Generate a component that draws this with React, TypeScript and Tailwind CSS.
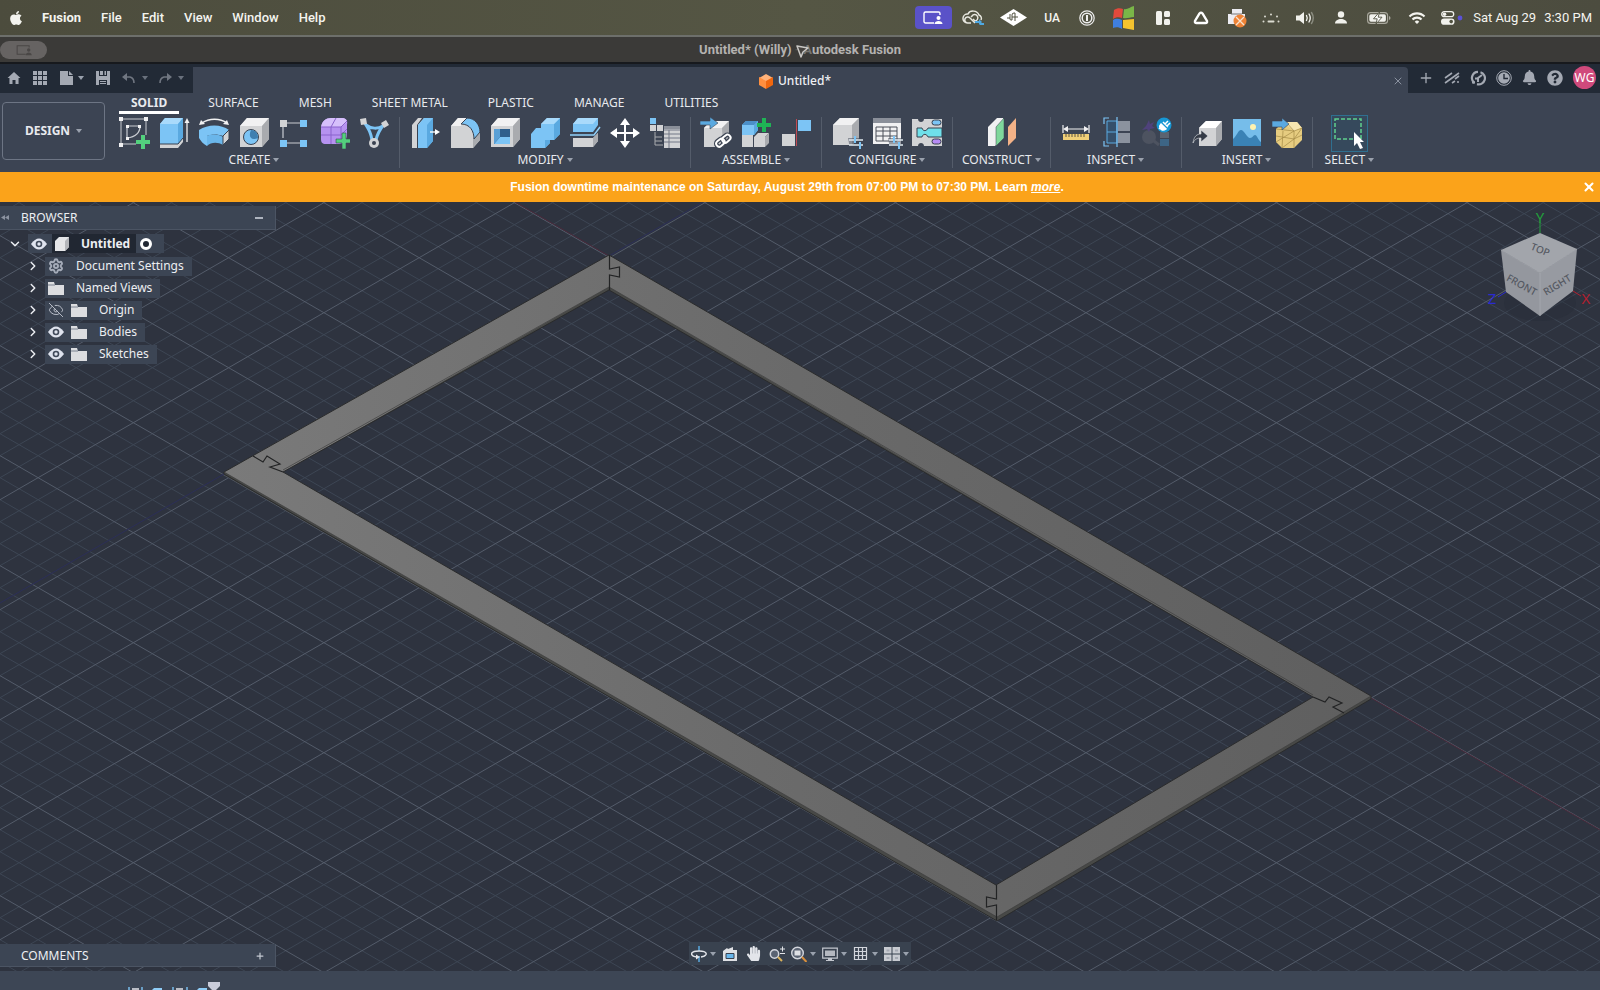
import React from "react";
import { FaApple, FaBell, FaHandPaper, FaQuestionCircle } from "react-icons/fa";
import { IoMdHome } from "react-icons/io";
import { MdWifi } from "react-icons/md";
import { ChevronDown, ChevronRight, EyeOff, Plus, Settings, X } from "lucide-react";

const BLUE = "#7cc4f5";
const BLUE_DARK = "#5aa9e0";
const WHITE = "#f1f1f2";
const GREY = "#d2d3d5";
const SHADE = "#a9abaf";

function Icon({ children }: { children: React.ReactNode }) {
  return (
    <svg viewBox="0 0 32 32" className="size-8" fill="none" aria-hidden="true">
      {children}
    </svg>
  );
}

function Caret() {
  return (
    <svg viewBox="0 0 6 4" className="h-1 w-1.5 shrink-0" aria-hidden="true">
      <path d="M0 0h6L3 4z" fill="#9aa1ad" />
    </svg>
  );
}

// White box used as the base of several tools
function Box() {
  return (
    <g>
      <path d="M2 9 9 1h22v21l-7 8H2z" fill={GREY} />
      <path d="M2 9 9 1h22l-7 8z" fill={WHITE} />
      <path d="M24 9l7-8v21l-7 8z" fill={SHADE} />
    </g>
  );
}

const createTools = [
  {
    name: "Create Sketch",
    icon: (
      <Icon>
        <path d="M3 2h25v16M3 2v25h15" stroke="#c9ccd2" />
        <path d="M1 0h4v4H1zM26 0h4v4h-4zM1 26h4v4H1z" fill={WHITE} />
        <path d="M9 21V9h13c0 7-5 11-13 12z" stroke="#c9ccd2" strokeWidth="1.2" />
        <path d="M8 8h3v3H8zM20 8h3v3h-3zM8 20h3v3H8z" fill={WHITE} />
        <path d="M23 18h4v5h5v4h-5v5h-4v-5h-5v-4h5z" fill="#53d07d" />
      </Icon>
    ),
  },
  {
    name: "Extrude",
    icon: (
      <Icon>
        <path d="M2 25h18l5-6v6l-5 6H2z" fill={GREY} />
        <path d="M2 7 7 1h18v20l-5 6H2z" fill={BLUE} />
        <path d="M2 7 7 1h18l-5 6z" fill="#a9dafb" />
        <path d="M20 7l5-6v20l-5 6z" fill={BLUE_DARK} />
        <path d="M2 27h18l5-6" stroke="#39414f" />
        <path d="M29 4v21" stroke={WHITE} strokeWidth="1.3" />
        <path d="M26.500 6 29 1l2.500 5z" fill={WHITE} />
      </Icon>
    ),
  },
  {
    name: "Revolve",
    icon: (
      <Icon>
        <path d="M1 13c9-6 22-6 30 0l-6 6c-5-2-12-2-16 0v10c-4-2-6-5-8-8z" fill={BLUE} />
        <path d="M9 19c4-2 11-2 16 1v8c-5-3-12-3-16 1z" fill="#6ab6ea" />
        <path d="M25 19l6-6v9l-6 6z" fill={GREY} stroke="#39414f" />
        <path d="M4 6C11 1 22 1 29 6" stroke={WHITE} strokeWidth="1.4" />
        <path d="M1 8l2-5 4 4zM31 8l-2-5-4 4z" fill={WHITE} />
      </Icon>
    ),
  },
  {
    name: "Hole",
    icon: (
      <Icon>
        <Box />
        <circle cx="13" cy="20" r="7.500" fill={BLUE} stroke="#3a4250" />
        <path d="M13 13c-3 7 0 11 7 8 0-5-3-8-7-8z" fill="#3f7fb0" />
      </Icon>
    ),
  },
  {
    name: "Pattern",
    icon: (
      <Icon>
        <path d="M8 6h14M5 9v12M8 26h14" stroke="#c9ccd2" strokeWidth="1.200" />
        <path d="M2 3h7v7H2z" fill={GREY} />
        <path d="M22 3h7v7h-7zM2 23h7v7H2zM22 23h7v7h-7z" fill={BLUE} />
      </Icon>
    ),
  },
  {
    name: "Create Form",
    icon: (
      <Icon>
        <path d="M3 10c1-6 5-9 10-9h11c4 0 6 2 5 7v10c0 5-4 9-8 9H8c-4 0-5-2-5-5z" fill="#b692f0" />
        <path d="M3 10c1-6 5-9 10-9h11c3 0 5 2 5 4l-6 5z" fill="#d6c0fb" />
        <path d="M3 18h20l6-6M13 27V10l5-9M23 27V10l6-6M3 10h20" stroke="#8a63cc" />
        <path d="M24 16h4v6h5v4h-5v6h-4v-6h-6v-4h6z" fill="#53d07d" stroke="#3a4a50" strokeWidth=".6" />
      </Icon>
    ),
  },
  {
    name: "Generative Design",
    icon: (
      <Icon>
        <path d="M6 5c6 9 7 12 8 18M26 7c-6 8-7 11-8 16M8 8c5 4 12 4 17 1" stroke={BLUE} strokeWidth="3" />
        <path d="M2 2l6-1 1 6-6 1zM23 6l5-3 3 5-5 3z" fill={GREY} />
        <circle cx="16" cy="26" r="5" fill={GREY} />
        <circle cx="16" cy="26" r="2" fill="#3a4250" />
      </Icon>
    ),
  },
];

const modifyTools = [
  {
    name: "Press Pull",
    icon: (
      <Icon>
        <path d="M3 8 9 1h8v22l-6 8H3z" fill={GREY} />
        <path d="M8 8 13 1h2L9 8v23H8z" fill="#3a4250" />
        <path d="M9 8 15 1h9v23l-6 7H9z" fill={BLUE} />
        <path d="M18 8l6-7v23l-6 7z" fill={BLUE_DARK} />
        <path d="M21 15h7" stroke="#fff" strokeWidth="1.300" />
        <path d="M26 12l5 3-5 3z" fill="#fff" />
      </Icon>
    ),
  },
  {
    name: "Fillet",
    icon: (
      <Icon>
        <path d="M2 9 9 1h8l14 18v4l-7 8H2z" fill={GREY} />
        <path d="M24 22l7-8v9l-7 8z" fill={SHADE} />
        <path d="M2 9 9 1h8l-5 8z" fill={WHITE} />
        <path d="M12 7l6-6c8 0 13 7 13 14l-6 7c0-8-4-15-13-15z" fill={BLUE} stroke="#3a4250" />
      </Icon>
    ),
  },
  {
    name: "Shell",
    icon: (
      <Icon>
        <Box />
        <path d="M5 12h16v15H5z" fill="#2f5f8c" />
        <path d="M5 27l6-7h10v7z" fill={BLUE} />
        <path d="M5 12h6v8l-6 7z" fill="#5aa0d6" />
      </Icon>
    ),
  },
  {
    name: "Combine",
    icon: (
      <Icon>
        <path d="M2 17l5-6h5V7l6-6h13v16l-6 6h-4v3l-5 5H2z" fill={BLUE} />
        <path d="M25 7l6-6v16l-6 6zM21 23v3l-5 5v-8z" fill={BLUE_DARK} />
        <path d="M12 7l6-6h13l-6 6z" fill="#a9dafb" />
      </Icon>
    ),
  },
  {
    name: "Split Body",
    icon: (
      <Icon>
        <path d="M4 21h20l5-5v8l-5 6H4z" fill={GREY} />
        <path d="M24 21l5-5v8l-5 6z" fill={SHADE} />
        <path d="M4 7 9 1h20v7l-5 7H4z" fill={BLUE} />
        <path d="M4 7 9 1h20l-5 6z" fill="#a9dafb" />
        <path d="M1 18h24l6-8" stroke="#8fd0fa" strokeWidth="1.500" />
      </Icon>
    ),
  },
  {
    name: "Move",
    icon: (
      <Icon>
        <path d="M16 4v24M4 16h24" stroke="#fff" strokeWidth="2" />
        <path d="M16 1l5 7H11zM16 31l5-7H11zM1 16l7-5v10zM31 16l-7-5v10z" fill="#fff" />
      </Icon>
    ),
  },
  {
    name: "Change Parameters",
    icon: (
      <Icon>
        <path d="M1 1h6v6H1z" fill={BLUE} />
        <path d="M1 8h6v6H1zM8 8h6v6H8z" fill={GREY} />
        <path d="M6 15v13h8M6 20h7M6 24h7" stroke={SHADE} />
        <path d="M15 9h16v22H15z" fill={GREY} />
        <path d="M15 13h16M15 17h16M15 21h16M15 25h16M20 13v18" stroke="#737987" />
        <path d="M15 9h16v3H15z" fill="#8a8f99" />
      </Icon>
    ),
  },
];

const assembleTools = [
  {
    name: "Insert Component",
    icon: (
      <Icon>
        <path d="M4 11l7-7h18v19l-6 7H4z" fill={GREY} />
        <path d="M4 11l7-7h18l-7 7z" fill={WHITE} />
        <path d="M22 11l7-7v19l-6 7z" fill={SHADE} />
        <path d="M0 4h10V0l8 6-8 6V8H0z" fill={BLUE_DARK} stroke="#3c4453" strokeWidth=".6" />
        <g stroke="#3c4453" strokeWidth="4.500">
          <rect x="16" y="23" width="9" height="6" rx="3" transform="rotate(-40 20 26)" />
          <rect x="22" y="19" width="9" height="6" rx="3" transform="rotate(-40 26 22)" />
        </g>
        <g stroke="#fff" strokeWidth="2">
          <rect x="16" y="23" width="9" height="6" rx="3" transform="rotate(-40 20 26)" />
          <rect x="22" y="19" width="9" height="6" rx="3" transform="rotate(-40 26 22)" />
        </g>
      </Icon>
    ),
  },
  {
    name: "New Component",
    icon: (
      <Icon>
        <path d="M2 18h11v12H2zM14 20l4-4h11l-4 4v10H14z" fill={GREY} />
        <path d="M25 20l4-4v10l-4 4z" fill={SHADE} />
        <path d="M2 8l4-4h12v9l-4 5H2z" fill={BLUE} />
        <path d="M14 8l4-4v9l-4 5z" fill={BLUE_DARK} />
        <path d="M2 8l4-4h12l-4 4z" fill="#4b8fc8" />
        <path d="M22 1h4v5h5v4h-5v5h-4v-5h-5V6h5z" fill="#1eb455" />
      </Icon>
    ),
  },
  {
    name: "Joint",
    icon: (
      <Icon>
        <path d="M2 17h13v12H2z" fill={GREY} />
        <path d="M18 3h13v11H18z" fill={BLUE} />
        <path d="M16.500 2v27" stroke="#c04a52" />
      </Icon>
    ),
  },
];

const configureTools = [
  {
    name: "Create Configuration",
    icon: (
      <Icon>
        <path d="M2 8l7-7h19v20l-7 7H2z" fill={GREY} />
        <path d="M2 8l7-7h19l-7 7z" fill={WHITE} />
        <path d="M21 8l7-7v20l-7 7z" fill={SHADE} />
        <path d="M17 21h15v11H19z" fill="#3c4453" opacity=".5" />
        <path d="M18 23h14M18 28h14" stroke="#dfe9f0" strokeWidth="1.600" />
        <path d="M24 19v7M29 25v7" stroke={BLUE} strokeWidth="2" />
      </Icon>
    ),
  },
  {
    name: "Configuration Table",
    icon: (
      <Icon>
        <path d="M2 1h28v26H2z" fill={WHITE} />
        <path d="M2 1h28v5H2z" fill="#8a8f99" />
        <path d="M5 10h21v14H5zM5 14h21M5 19h21M12 10v14M19 10v14" stroke="#4a4f59" />
        <path d="M17 21h15v11H19z" fill="#3c4453" opacity=".5" />
        <path d="M18 23h14M18 28h14" stroke="#dfe9f0" strokeWidth="1.600" />
        <path d="M23 19v7M28 25v7" stroke={BLUE} strokeWidth="2" />
      </Icon>
    ),
  },
  {
    name: "Theme Table",
    icon: (
      <Icon>
        <path d="M1 2h6c0 4 6 4 6 0h18v27H13c0-4-6-4-6 0H1z" fill={GREY} />
        <rect x="21" y="3" width="9" height="5" rx="2.500" fill={BLUE} stroke="#39414f" />
        <path d="M6 11h5c1 4 5 3 6 0h14v9H17c-1-3-5-4-6 0H6z" fill="#6fe0ea" stroke="#39414f" />
        <rect x="21" y="22" width="9" height="5" rx="2.500" fill="#b78cf5" stroke="#39414f" />
      </Icon>
    ),
  },
];

const constructTools = [
  {
    name: "Offset Plane",
    icon: (
      <Icon>
        <path d="M3 10 12 1h6v20l-8 8H3z" fill={WHITE} />
        <path d="M11 10l8-9v20l-8 8z" fill="#7fd79b" stroke="#39414f" strokeWidth=".5" />
        <path d="M23 10l8-9v20l-8 8z" fill="#f3b287" />
      </Icon>
    ),
  },
];

const inspectTools = [
  {
    name: "Measure",
    icon: (
      <Icon>
        <path d="M3 8v8M29 8v8M5 12h22" stroke={WHITE} strokeWidth="1.200" />
        <path d="M3 12l5-3v6zM29 12l-5-3v6z" fill={WHITE} />
        <path d="M3 17h26v6H3z" fill="#f0cf78" />
        <path d="M6 17v3M9 17v3M12 17v3M15 17v3M18 17v3M21 17v3M24 17v3" stroke="#5c5540" />
      </Icon>
    ),
  },
  {
    name: "Section Analysis",
    icon: (
      <Icon>
        <path d="M18 4h12v10H18zM18 16h12v10H18z" fill="#8b929e" />
        <path d="M7 4h10v22H7zM7 15h10" stroke={BLUE_DARK} fill="#35506b" />
        <path d="M9 1H4v6M9 29H4v-5M17 0v30" stroke={BLUE} strokeWidth="1.200" />
      </Icon>
    ),
  },
  {
    name: "Simulation",
    icon: (
      <Icon>
        <circle cx="9" cy="20" r="7" fill="#4d5360" />
        <path d="M14 24l5 4" stroke="#4d5360" strokeWidth="3" />
        <path d="M9 3l1 4 4-2-2 4 3 2-5 1-1 3-2-3-5 1 4-4z" fill="#4f427c" />
        <path d="M20 15h9v6h-9z" fill="#5b6370" />
        <path d="M20 22h9v7h-9z" fill="#3d6585" />
        <circle cx="24" cy="8" r="7.500" fill="#1797d4" />
        <path d="M19 12l3-3M21 7l5 5c-3 2-5 1-6-1s0-3 1-4zM23 5l5 5M25 7l3-3M27 9l3-3" stroke="#fff" strokeWidth="1.500" fill="#fff" />
      </Icon>
    ),
  },
];

const insertTools = [
  {
    name: "Insert Derive",
    icon: (
      <Icon>
        <path d="M8 11l7-7h16v18l-6 7H8z" fill={GREY} />
        <path d="M8 11l7-7h16l-6 7z" fill="#fff" />
        <path d="M25 11l6-7v18l-6 7z" fill={SHADE} />
        <path d="M2 26c1-7 4-9 8-9v-4l7 6-7 6v-4c-4 0-6 1-8 5z" fill="#353b47" stroke="#dfe2e6" strokeWidth=".6" />
      </Icon>
    ),
  },
  {
    name: "Decal",
    icon: (
      <Icon>
        <path d="M2 2h28v27H2z" fill="#76bdea" />
        <circle cx="22" cy="10" r="3" fill="#fff3b0" />
        <path d="M2 22c4-3 5-9 8-9s6 8 9 8 3-3 5-3 3 5 6 7v4H2z" fill="#3a82b5" />
      </Icon>
    ),
  },
  {
    name: "Insert Mesh",
    icon: (
      <Icon>
        <path d="M5 12l7-7h14l5 6v12l-8 8H11l-6-6z" fill="#e6cc80" />
        <path d="M12 5h14l5 6-8 3z" fill="#f7e6b0" />
        <path d="M5 12l18 2 8-3M23 14v17M5 19l18 3 8-4M5 25l18-11M11 31l12-9M31 11l-8 11M12 14l-1 17M15 5l8 9" stroke="#a38a45" strokeWidth=".7" />
        <path d="M1 4h10V1l7 6-7 6v-3H1z" fill={BLUE_DARK} stroke="#3c4453" strokeWidth=".6" />
      </Icon>
    ),
  },
];

const toolGroups = [
  { label: "CREATE", tools: createTools },
  { label: "MODIFY", tools: modifyTools },
  { label: "ASSEMBLE", tools: assembleTools },
  { label: "CONFIGURE", tools: configureTools },
  { label: "CONSTRUCT", tools: constructTools },
  { label: "INSPECT", tools: inspectTools },
  { label: "INSERT", tools: insertTools },
];

const statusItems = [
  {
    name: "Screen sharing",
    width: "w-10",
    icon: (
      <span className="flex h-[23px] w-[37px] items-center justify-center rounded bg-[#5a52c8]">
        <svg viewBox="0 0 20 14" className="h-3.5 w-5" fill="none">
          <path d="M11 12H2.500A1.500 1.500 0 0 1 1 10.500V2.500A1.500 1.500 0 0 1 2.500 1h13A1.500 1.500 0 0 1 17 2.500V4" stroke="#fff" strokeWidth="1.400" />
          <circle cx="15.500" cy="7" r="2" fill="#fff" />
          <path d="M11.500 13c0-4 8-4 8 0z" fill="#fff" />
        </svg>
      </span>
    ),
  },
  {
    name: "Creative Cloud",
    width: "w-10",
    icon: (
      <svg viewBox="0 0 22 16" className="h-4 w-[22px]" fill="none">
        <path d="M5 13a4.500 4.500 0 0 1 1-9c2-4 9-4 11 1 2 1 3 3 2 5M9 13H6a3 3 0 1 1 2-5l5 5" stroke="#e8e8e0" strokeWidth="1.500" />
        <path d="M9 7l1-1a3.200 3.200 0 1 1 3 5l-2-2" stroke="#e8e8e0" strokeWidth="1.500" />
        <path d="M13 11h4V9l3 3-3 3v-2h-4zM18 13h4v2h-4z" fill="#4fa8e0" />
      </svg>
    ),
  },
  {
    name: "Audio console",
    width: "w-10",
    icon: (
      <svg viewBox="0 0 27 17" className="h-[17px] w-[27px]" fill="none">
        <path d="M13.500 0 27 8.500 13.500 17 0 8.500z" fill="#fff" />
        <path d="M10 5v5q0 1 1 1h1V6q0-2 2-2h1v8M12 8h6M7 9h3" stroke="#50513f" />
      </svg>
    ),
  },
  { name: "UA", width: "w-[38px]", icon: <span className="text-xs font-medium">UA</span> },
  {
    name: "1Password",
    width: "w-8",
    icon: (
      <svg viewBox="0 0 16 16" className="size-4" fill="none">
        <circle cx="8" cy="8" r="7.200" stroke="#eee" strokeWidth="1.200" />
        <circle cx="8" cy="8" r="4.800" stroke="#eee" strokeWidth="1.500" />
        <path d="M8 5v6" stroke="#eee" strokeWidth="2" />
      </svg>
    ),
  },
  {
    name: "Windows",
    width: "w-10",
    icon: (
      <svg viewBox="0 0 24 26" className="h-[26px] w-6">
        <path d="M3 5c3-2 6-2 9-1l-1 9c-3-1-6-1-9 1z" fill="#e2493c" />
        <path d="M13 4c3 1 6-2 10-3v11c-4 0-7 2-11 1z" fill="#7ab648" />
        <path d="M2 15c3-2 6-1 9 0v9c-3-2-6-2-9-1z" fill="#3f7fe0" />
        <path d="M12 15c4 0 7-1 11-1v11l-11-2z" fill="#f4c32f" />
      </svg>
    ),
  },
  {
    name: "Window layout",
    width: "w-10",
    icon: (
      <svg viewBox="0 0 14 14" className="size-3.5" fill="#f1f1ec">
        <rect width="6" height="14" rx="1.500" />
        <rect x="8" width="6" height="6" rx="1.500" />
        <rect x="8" y="8" width="6" height="6" rx="1.500" />
      </svg>
    ),
  },
  {
    name: "Drive",
    width: "w-9",
    icon: (
      <svg viewBox="0 0 16 14" className="h-3.5 w-4" fill="none">
        <path d="M6.500 2.500q1.500-1.800 3 0l4.500 7.500q.5 2-1.500 2h-9Q1.500 12 2 10z" stroke="#fff" strokeWidth="2.400" />
      </svg>
    ),
  },
  {
    name: "Printer",
    width: "w-9",
    icon: (
      <svg viewBox="0 0 20 20" className="size-5" fill="none">
        <path d="M5 1h10v5h3v10H1V6h4z" fill="#ececf2" />
        <path d="M4 6h11" stroke="#777" />
        <circle cx="13" cy="13" r="6.500" fill="#ee8336" />
        <path d="M9 9l8 8M17 9l-8 8" stroke="#f8e3d0" strokeWidth="1.300" />
      </svg>
    ),
  },
  {
    name: "Dots",
    width: "w-8",
    icon: (
      <svg viewBox="0 0 18 10" className="h-2.5 w-[18px]" fill="#dcdcd2">
        <circle cx="3" cy="3.500" r="1" />
        <circle cx="9" cy="1.500" r="1" />
        <circle cx="15" cy="3.500" r="1" />
        <circle cx="1.500" cy="8.500" r="1" />
        <rect x="5.500" y="7.500" width="7" height="2" rx="1" />
        <circle cx="16.500" cy="8.500" r="1" />
      </svg>
    ),
  },
  {
    name: "Volume",
    width: "w-9",
    icon: (
      <svg viewBox="0 0 20 14" className="h-3.5 w-5" fill="none">
        <path d="M1 4.500h3.500L9 1v12L4.500 9.500H1z" fill="#f1f1ec" />
        <path d="M11.500 4.500q1.500 2.500 0 5M14 3q2.500 4 0 8" stroke="#f1f1ec" strokeWidth="1.400" strokeLinecap="round" />
        <path d="M16.500 1.500q3.500 5.500 0 11" stroke="#8b8c80" strokeWidth="1.400" strokeLinecap="round" />
      </svg>
    ),
  },
  {
    name: "User",
    width: "w-9",
    icon: (
      <svg viewBox="0 0 12 13" className="h-[13px] w-3" fill="#f1f1ec">
        <circle cx="6" cy="3.500" r="3.200" />
        <path d="M0 12.500C0 6.500 12 6.500 12 12.500z" />
      </svg>
    ),
  },
  {
    name: "Battery",
    width: "w-10",
    icon: (
      <svg viewBox="0 0 24 12" className="h-3 w-6" fill="none">
        <rect x=".6" y=".6" width="20" height="10.800" rx="3" stroke="#aaa99e" strokeWidth="1.100" />
        <rect x="2.300" y="2.300" width="16.600" height="7.400" rx="1.600" fill="#f1f1ec" />
        <path d="M22 4v4q1.500-.5 1.500-2T22 4z" fill="#aaa99e" />
        <path d="M12.500 0 6.500 6.800h3.700L9 12l6-6.800h-3.800z" fill="#fff" stroke="#50513f" strokeWidth=".9" />
      </svg>
    ),
  },
  { name: "Wi-Fi", width: "w-9", icon: <MdWifi className="size-[18px]" /> },
  {
    name: "Control centre",
    width: "w-[34px]",
    icon: (
      <svg viewBox="0 0 22 14" className="h-3.5 w-[22px]" fill="none">
        <rect x=".7" y=".7" width="12" height="5" rx="2.500" stroke="#f1f1ec" strokeWidth="1.300" />
        <circle cx="3.500" cy="3.200" r="1.800" fill="#f1f1ec" />
        <rect y="7.500" width="13.500" height="6.300" rx="3.100" fill="#f1f1ec" />
        <circle cx="10.200" cy="10.600" r="1.800" fill="#50513f" />
        <circle cx="19" cy="7" r="2.400" fill="#5b52d6" />
      </svg>
    ),
  },
];

function MenuBar() {
  return (
    <header className="flex h-[35px] shrink-0 items-center bg-gradient-to-r from-[#4c4c3d] via-[#555644] to-[#4c4c3f] px-2 font-['Roboto',sans-serif] text-[13px] text-[#f4f4ef]">
      <button aria-label="Apple menu" className="mr-[18px]">
        <FaApple className="size-4" />
      </button>
      <nav className="flex gap-5">
        <button className="font-bold">Fusion</button>
        {["File", "Edit", "View", "Window", "Help"].map((item) => (
          <button key={item} className="font-medium">
            {item}
          </button>
        ))}
      </nav>
      <div className="ml-auto flex items-center">
        {statusItems.map((item) => (
          <button key={item.name} aria-label={item.name} className={`flex h-8 items-center justify-center ${item.width}`}>
            {item.icon}
          </button>
        ))}
        <time className="flex gap-2 pl-1 whitespace-nowrap">
          <span>Sat Aug 29</span>
          <span>3:30 PM</span>
        </time>
      </div>
    </header>
  );
}

function TitleBar() {
  return (
    <div className="flex h-[29px] shrink-0 items-center border-t-2 border-b-2 border-t-[#6d6f6b] border-b-[#17191d] bg-[#3b3a38] font-['Roboto',sans-serif]">
      <div className="flex flex-1">
        <span className="flex h-[18px] w-[47px] items-center justify-center rounded-full bg-[#666362]">
          <svg viewBox="0 0 20 14" className="h-3 w-[18px]" fill="none">
            <path d="M12 12H2V2h14v2" stroke="#4a4746" strokeWidth="1.200" />
            <circle cx="15.500" cy="7" r="2" fill="#4a4746" />
            <path d="M12 13c0-4 7-4 7 0z" fill="#4a4746" />
          </svg>
        </span>
      </div>
      <h1 className="relative text-[13px] font-bold text-[#b4b2b0]">
        Untitled* (Willy) <span className="text-[#55524f]">-</span> <span className="text-[#77746f]">A</span>utodesk Fusion
        <svg viewBox="0 0 16 16" className="absolute top-1 left-24 size-4">
          <path d="M2 2l11 2-5 4-2 5z" fill="#45423f" stroke="#c9c7c4" strokeWidth="1.500" strokeLinejoin="round" />
        </svg>
      </h1>
      <div className="flex-1" />
    </div>
  );
}

function TabRow() {
  return (
    <div className="flex h-[29px] shrink-0 bg-[#222a36] text-[#a4a9b3]">
      <div className="flex w-[193px] items-center pb-0.5 pl-1.5">
        <button aria-label="Home">
          <IoMdHome className="size-4" />
        </button>
        <button aria-label="Data panel" className="ml-[11px]">
          <svg viewBox="0 0 14 14" className="size-3.5" fill="#a4a9b3">
            <path d="M0 0h4v4H0zM5 0h4v4H5zM10 0h4v4h-4zM0 5h4v4H0zM5 5h4v4H5zM10 5h4v4h-4zM0 10h4v4H0zM5 10h4v4H5zM10 10h4v4h-4z" />
          </svg>
        </button>
        <button aria-label="File" className="ml-[13px] flex items-center gap-1">
          <svg viewBox="0 0 14 14" className="size-3.5" fill="#a4a9b3">
            <path d="M0 0h8v5h5v9H0zM9 0l4 4H9z" />
          </svg>
          <Caret />
        </button>
        <button aria-label="Save" className="ml-3">
          <svg viewBox="0 0 14 14" className="size-3.5">
            <path d="M0 0h14v14H0z" fill="#a4a9b3" />
            <path d="M3 0h8v5H3zM3 9h8v5H3z" fill="#222a36" />
            <path d="M4 0h3v4H4zM8.500 0H10v4H8.500zM4 10h6v1H4zM4 12h6v1H4z" fill="#a4a9b3" />
          </svg>
        </button>
        <button aria-label="Undo" className="ml-3 flex items-center gap-1.5 opacity-60">
          <svg viewBox="0 0 14 12" className="h-3 w-3.5" fill="none">
            <path d="M3 5h5q4 1 4 6" stroke="#a4a9b3" strokeWidth="1.600" />
            <path d="M0 5l5-4v8z" fill="#a4a9b3" />
          </svg>
          <Caret />
        </button>
        <button aria-label="Redo" className="ml-2.5 flex items-center gap-1.5 opacity-60">
          <svg viewBox="0 0 14 12" className="h-3 w-3.5" fill="none">
            <path d="M11 5H6q-4 1-4 6" stroke="#a4a9b3" strokeWidth="1.600" />
            <path d="M14 5 9 1v8z" fill="#a4a9b3" />
          </svg>
          <Caret />
        </button>
      </div>
      <div className="mt-[3px] flex flex-1 items-center rounded-tr-sm bg-[#3c4453] pt-0.5 pr-1">
        <div className="flex flex-1 items-center justify-center gap-1 pl-1 text-xs font-medium text-[#eef0f3]">
          <svg viewBox="0 0 16 16" className="size-4">
            <path d="M8 1l7 4-7 4-7-4z" fill="#ffb27a" />
            <path d="M1 4l7 4v8l-7-4z" fill="#ff8f3f" />
            <path d="M15 4L8 8v8l7-4z" fill="#f0670f" />
          </svg>
          Untitled*
        </div>
        <button aria-label="Close tab">
          <X className="size-3 text-[#8b92a0]" />
        </button>
      </div>
      <div className="flex w-[192px] items-center justify-between pr-1 pb-0.5 pl-2.5">
        <button aria-label="New tab">
          <Plus className="size-4" />
        </button>
        <button aria-label="Extensions">
          <svg viewBox="0 0 16 12" className="h-3 w-4" stroke="#a4a9b3" strokeWidth="1.600">
            <path d="M1 6l7-5M1 11 15 1M8 11l3-2M11 7l4-3" />
            <circle cx="14" cy="10" r="1" fill="#a4a9b3" stroke="none" />
          </svg>
        </button>
        <button aria-label="Job status">
          <svg viewBox="0 0 16 16" className="size-4" fill="none">
            <path d="M4.500 13A6.200 6.200 0 0 1 8 1.800M10.500 2.200A6.200 6.200 0 1 1 7 14.100" stroke="#a4a9b3" strokeWidth="2.200" />
            <path d="M8 12V8l4-3M5 8.500h3M2 12.500h3" stroke="#a4a9b3" strokeWidth="2" />
          </svg>
        </button>
        <button aria-label="History">
          <svg viewBox="0 0 16 16" className="size-4" fill="none">
            <circle cx="8" cy="8" r="7.300" stroke="#a4a9b3" />
            <circle cx="8" cy="8" r="5.800" fill="#a4a9b3" />
            <path d="M8 4v4.500h4" stroke="#222a36" strokeWidth="1.400" />
          </svg>
        </button>
        <button aria-label="Notifications">
          <FaBell className="size-[15px]" />
        </button>
        <button aria-label="Help">
          <FaQuestionCircle className="size-4" />
        </button>
        <button className="size-[23px] rounded-full bg-[#d04a7c] text-xs text-white">WG</button>
      </div>
    </div>
  );
}

function Ribbon() {
  return (
    <div className="flex h-[79px] shrink-0 bg-[#3c4453] text-xs text-[#e8eaee]">
      <button className="mt-[9px] ml-0.5 flex h-[58px] w-[103px] items-center justify-center gap-1.5 rounded border border-[#6d7584] font-bold">
        DESIGN
        <Caret />
      </button>
      <div className="flex flex-1 flex-col pl-1">
        <nav className="ml-2.5 flex h-[21px] gap-[18px]">
          <button className="border-b-[3px] border-white px-3 pt-0.5 font-bold">SOLID</button>
          {["SURFACE", "MESH", "SHEET METAL", "PLASTIC", "MANAGE", "UTILITIES"].map((tab) => (
            <button key={tab} className="border-b-[3px] border-transparent px-[11px] pt-0.5">
              {tab}
            </button>
          ))}
        </nav>
        <div className="flex pt-[3px]">
          {toolGroups.map((group) => (
            <section key={group.label} className="flex flex-col items-center border-r border-[#545c6a] px-[9px]">
              <div className="flex gap-2">
                {group.tools.map((tool) => (
                  <button key={tool.name} aria-label={tool.name}>
                    {tool.icon}
                  </button>
                ))}
              </div>
              <button className="flex h-[19px] items-center gap-[3px] pt-0.5 leading-none">
                {group.label}
                <Caret />
              </button>
            </section>
          ))}
          <section className="flex flex-col items-center px-3">
            <button aria-label="Select" className="-mt-0.5 mb-[-3px] h-[37px] w-[37px] border border-[#2f7090] bg-[#36495c]">
              <svg viewBox="0 0 35 35" className="size-[35px]" fill="none">
                <rect x="3" y="3" width="26" height="20" stroke="#5fcf8d" strokeWidth="1.500" strokeDasharray="4 2" />
                <path d="M22 16v14l3-3 3 6 3-1-3-6h4z" fill="#fff" />
              </svg>
            </button>
            <button className="flex h-[19px] items-center gap-[3px] pt-0.5 leading-none">
              SELECT
              <Caret />
            </button>
          </section>
        </div>
      </div>
    </div>
  );
}

function Banner() {
  return (
    <div className="flex h-[30px] shrink-0 items-center bg-[#fba31a] pr-1 font-['Liberation_Sans',Arial,sans-serif] text-xs font-bold text-white">
      <p className="flex-1 pr-2 text-center">
        Fusion downtime maintenance on Saturday, August 29th from 07:00 PM to 07:30 PM. Learn{" "}
        <a href="#more" className="italic underline">
          more
        </a>
        .
      </p>
      <button aria-label="Dismiss">
        <X className="size-3.5" strokeWidth={3.5} />
      </button>
    </div>
  );
}

// Isometric ground grid: every fifth line is a major one
const SLOPE = 55 / 95.26;
const gridLines = (major: boolean) => {
  let d = "";
  for (let k = -60; k <= 70; k++) {
    if ((k % 5 === 0) !== major) continue;
    const down = 345.7 + 22 * k;
    const up = 499.7 + 22 * k;
    d += `M0 ${down}L1600 ${down + 1600 * SLOPE}M0 ${up}L1600 ${up - 1600 * SLOPE}`;
  }
  return d;
};

function Scene() {
  return (
    <svg
      viewBox="0 202 1600 769"
      preserveAspectRatio="xMidYMid slice"
      className="absolute inset-0 h-full w-full"
      fill="none"
      role="img"
      aria-label="Model canvas"
    >
      <defs>
        <linearGradient id="metal" x1="0" y1="0" x2="1" y2="0">
          <stop offset="0" stopColor="#7a7a7a" />
          <stop offset="0.500" stopColor="#6a6a6a" />
          <stop offset="1" stopColor="#5f5f5f" />
        </linearGradient>
      </defs>
      <path d={gridLines(false)} stroke="#3d4654" />
      <path d={gridLines(true)} stroke="#545c6a" />
      <path d="M1371 698 1600 830M609 256 515 202" stroke="#4a2a3b" />
      <path d="M609 256 703 202M224 474 0 603" stroke="#2c2f58" />
      <path
        fillRule="evenodd"
        d="M224 472 609 255 1371 696V699L997 921 224 475zM283 472 996 885 1313 697 609 290z"
        fill="#484947"
      />
      <path
        fillRule="evenodd"
        d="M224 472 609 255 1371 696 997 917zM283 472 996 885 1313 697 609 287z"
        fill="url(#metal)"
      />
      <path
        d="M224 472 609 255 1371 696V699L997 921 224 474zM283 472 996 885 1313 697 609 290z"
        stroke="#2a2b2c"
      />
      <path d="M283 470 609 287 1313 695M224 472 997 917 1371 696" stroke="#3d3e3e" strokeWidth=".7" />
      <path
        d="M609.500 255v14l10-2v10l-10-2v15M253 456l10 6 4-6 13 8-10 3 13 5M1313 697l12 5 4-5 13 6-9 4 11 6M996.500 885v14l-10-2v10l10-2v15"
        stroke="#222324"
        strokeWidth="1.200"
      />
    </svg>
  );
}

function ViewCube() {
  return (
    <svg viewBox="0 0 120 130" className="absolute top-[3px] right-0 h-[130px] w-[120px]" role="img" aria-label="View cube">
      <ellipse cx="60" cy="98" rx="36" ry="18" fill="#262b36" opacity=".35" />
      <path d="M60 18v10" stroke="#22a03c" />
      <path d="M26 87l-8 5" stroke="#2a2ad0" />
      <path d="M93 86l8 5" stroke="#b02030" />
      <path d="M60 28 21 45 60 68 97 44z" fill="#a2a5ab" />
      <path d="M21 45l39 23v43L26 87z" fill="#94979e" />
      <path d="M97 44 60 68v43l33-25z" fill="#979aa1" />
      <path d="M21 45l39 23 37-24M60 68v43" stroke="#a9acb2" fill="none" strokeWidth=".7" />
      <g className="font-['Noto_Sans',sans-serif]" textAnchor="middle">
        <text x="60" y="18" fontSize="15" fill="#22a03c">
          Y
        </text>
        <text x="12" y="99" fontSize="15" fill="#2a2ad0">
          Z
        </text>
        <text x="106" y="99" fontSize="15" fill="#b02030">
          X
        </text>
        <g fill="#555962" fontWeight="500" fontSize="10">
          <text transform="translate(59 48) rotate(22)">TOP</text>
          <text transform="translate(40 83) rotate(29)">FRONT</text>
          <text transform="translate(79 83) rotate(-31)">RIGHT</text>
        </g>
      </g>
    </svg>
  );
}

const browserItems = [
  { label: "Document Settings", icon: "settings" },
  { label: "Named Views", icon: "folder" },
  { label: "Origin", icon: "folder", visible: false },
  { label: "Bodies", icon: "folder", visible: true },
  { label: "Sketches", icon: "folder", visible: true },
];

function Visibility({ on }: { on: boolean }) {
  return (
    <button aria-label={on ? "Hide" : "Show"}>
      {on ? (
        <svg viewBox="0 0 16 12" className="h-3 w-4">
          <path d="M0 6q8-11 16 0-8 11-16 0z" fill="#dfe3ee" />
          <circle cx="8" cy="6" r="3.300" fill="#414a5a" />
          <circle cx="8" cy="6" r="1.700" fill="#dfe3ee" />
        </svg>
      ) : (
        <EyeOff className="size-4 text-[#b6bbc6]" strokeWidth={1.5} />
      )}
    </button>
  );
}

function Folder() {
  return (
    <svg viewBox="0 0 16 14" className="h-3.5 w-4">
      <path d="M0 1h6l1 3h9v10H0z" fill="#dcdde0" />
      <path d="M0 4h7" stroke="#7b8290" />
    </svg>
  );
}

function BrowserPanel() {
  return (
    <aside className="text-xs text-[#eceef2]">
      <div className="flex h-6 w-[276px] items-center border-r border-b border-[#4b5463] bg-[#3c4554] pr-3">
        <button aria-label="Collapse" className="w-[21px]">
          <svg viewBox="0 0 8 5" className="ml-px h-[5px] w-2" fill="#8b92a0">
            <path d="M4 0v5L0 2.500zM8 0v5L4 2.500z" />
          </svg>
        </button>
        <h2 className="flex-1">BROWSER</h2>
        <button aria-label="Minimize" className="h-0.5 w-2 bg-[#aeb4bf]" />
      </div>
      <ul className="pt-0.5">
        <li className="flex h-[23px] items-center">
          <button aria-label="Collapse Untitled" className="w-7 pl-2">
            <ChevronDown className="size-3.5" strokeWidth={2.5} />
          </button>
          <span className="flex h-[19px] w-6 items-center bg-[#3c4554] pl-[3px]">
            <Visibility on />
          </span>
          <span className="flex h-[19px] items-center bg-[#212732] px-[3px] pr-1.5 font-bold">
            <svg viewBox="0 0 14 14" className="mr-3 size-3.5">
              <path d="M0 4l4-4h10v10l-4 4H0z" fill="#e5e6e8" />
              <path d="M10 4l4-4v10l-4 4z" fill="#b4b6ba" />
            </svg>
            Untitled
          </span>
          <span className="flex h-[19px] items-center bg-[#3c4554] pr-3 pl-1">
            <input type="radio" aria-label="Activate Untitled" defaultChecked className="size-3 appearance-none rounded-full border-[3px] border-white bg-[#212732]" />
          </span>
        </li>
        {browserItems.map((item) => (
          <li key={item.label} className="flex h-[22px] items-center pl-[26px]">
            <button aria-label={`Expand ${item.label}`} className="w-[19px]">
              <ChevronRight className="size-3.5" strokeWidth={2.5} />
            </button>
            <span className="flex h-[19px] items-center bg-[#3c4554] px-[3px] pr-2">
              {item.visible !== undefined && (
                <span className="mr-[7px] flex">
                  <Visibility on={item.visible} />
                </span>
              )}
              {item.icon === "settings" ? <Settings className="size-4 text-[#a4abb8]" strokeWidth={3} /> : <Folder />}
              <span className="ml-3">{item.label}</span>
            </span>
          </li>
        ))}
      </ul>
    </aside>
  );
}

const navTools = [
  {
    name: "Orbit",
    caret: true,
    icon: (
      <svg viewBox="0 0 16 16" className="size-4" fill="none">
        <path d="M8 0v5M8 10v6" stroke="#5aa9e0" strokeWidth="1.500" />
        <path d="M6 11C-1 10-1 6 5 5.200 12 4.500 16 6 15 8.500q-1 2-5 2.500" stroke="#e3e5ea" strokeWidth="1.500" />
        <path d="M5 8.500l4 2.500-4 2.500z" fill="#e3e5ea" />
      </svg>
    ),
  },
  {
    name: "Look At",
    icon: (
      <svg viewBox="0 0 16 16" className="size-4" fill="none">
        <path d="M1 5l4-3 1 1 5-2v3h4v11H1z" fill="#dfe1e5" />
        <path d="M4 7.500h8v5H4z" fill="#69b6ea" stroke="#39414f" />
      </svg>
    ),
  },
  { name: "Pan", icon: <FaHandPaper className="mx-0.5 size-[15px] text-[#e3e5ea]" /> },
  {
    name: "Zoom",
    icon: (
      <svg viewBox="0 0 16 16" className="size-4" fill="none">
        <circle cx="5.500" cy="8" r="4.200" stroke="#d2d5dc" strokeWidth="1.500" fill="#5a6372" />
        <path d="M9 11l4 4" stroke="#d9b25c" strokeWidth="2" />
        <path d="M11 3h5M13.500.500v5M11 7.500h5" stroke="#e3e5ea" />
      </svg>
    ),
  },
  {
    name: "Fit",
    caret: true,
    icon: (
      <svg viewBox="0 0 16 16" className="size-4" fill="none">
        <circle cx="6.500" cy="7" r="5.800" stroke="#d2d5dc" strokeWidth="1.400" fill="#5a6372" />
        <path d="M3.500 4.500h6v5h-6z" fill="#dfe1e5" />
        <path d="M11 11l4.500 5" stroke="#d98f3c" strokeWidth="2" />
      </svg>
    ),
  },
  {
    name: "Display Settings",
    caret: true,
    icon: (
      <svg viewBox="0 0 16 16" className="size-4" fill="none">
        <path d="M.7 2.200h14.600v10H.7z" stroke="#c3c7cf" strokeWidth="1.200" />
        <path d="M3 4.500h10V10H3z" fill="#b4b8c0" />
        <path d="M6 12h4v2h2v1H4v-1h2z" fill="#c3c7cf" />
      </svg>
    ),
  },
  {
    name: "Grid and Snaps",
    caret: true,
    icon: (
      <svg viewBox="0 0 16 16" className="size-4" fill="none">
        <path d="M1.500 1.500h12v12h-12zM5.500 1.500v12M9.500 1.500v12M1.500 5.500h12M1.500 9.500h12" stroke="#d2d5dc" strokeWidth="1.200" />
      </svg>
    ),
  },
  {
    name: "Viewports",
    caret: true,
    icon: (
      <svg viewBox="0 0 16 14" className="h-3.5 w-4">
        <path d="M0 0h7.500v6.500H0zM8.500 0H16v6.500H8.500zM0 7.500h7.500V14H0zM8.500 7.500H16V14H8.500z" fill="#c8cbd1" />
        <path d="M2.500 2.500h3v2h-3zM11 2.500h3v2h-3zM2.500 10h3v2h-3zM11 10h3v2h-3z" fill="#a5aab3" />
      </svg>
    ),
  },
];

function BottomOverlay() {
  return (
    <div className="flex items-end pb-1">
      <div className="flex-1">
        <div className="flex h-[23px] w-[276px] items-center border-r border-b border-[#4b5463] bg-[#3c4554] pt-0.5 pr-2.5 pl-[21px] text-xs text-[#eceef2]">
          <h2 className="flex-1">COMMENTS</h2>
          <button aria-label="Add comment">
            <Plus className="size-2.5 text-[#c3c8d1]" strokeWidth={3} />
          </button>
        </div>
      </div>
      <div className="mb-0.5 flex h-[23px] items-center gap-1.5 bg-[#39424f] px-0.5">
        {navTools.map((tool) => (
          <button key={tool.name} aria-label={tool.name} className="flex items-center gap-[3px]">
            {tool.icon}
            {tool.caret && <Caret />}
          </button>
        ))}
      </div>
      <div className="flex-1" />
    </div>
  );
}

function Timeline() {
  return (
    <footer className="h-[19px] shrink-0 overflow-hidden bg-[#3d4655] pt-[11px] pl-[127px]">
      <svg viewBox="0 0 96 20" className="h-5 w-24" fill="none">
        <path d="M2 12V5M15 12V5M46 12V5M60 12V5" stroke="#7cc4f5" strokeWidth="1.400" />
        <path d="M5 7h7M49 7h7" stroke="#e3e5ea" strokeWidth="1.400" />
        <path d="M24 9l3-3h8v3zM69 9l3-3h8v3z" fill="#8fcdf7" />
        <path d="M81 0h12v4l-6 6-6-6z" fill="#c9ccda" />
      </svg>
    </footer>
  );
}

export default function App() {
  return (
    <div className="flex h-screen flex-col overflow-hidden font-['Noto_Sans',sans-serif]">
      <MenuBar />
      <TitleBar />
      <TabRow />
      <Ribbon />
      <Banner />
      <main className="relative min-h-0 flex-1 overflow-hidden bg-[#2e333f]">
        <Scene />
        <ViewCube />
        <div className="relative flex h-full flex-col justify-between pt-1">
          <BrowserPanel />
          <BottomOverlay />
        </div>
      </main>
      <Timeline />
    </div>
  );
}
